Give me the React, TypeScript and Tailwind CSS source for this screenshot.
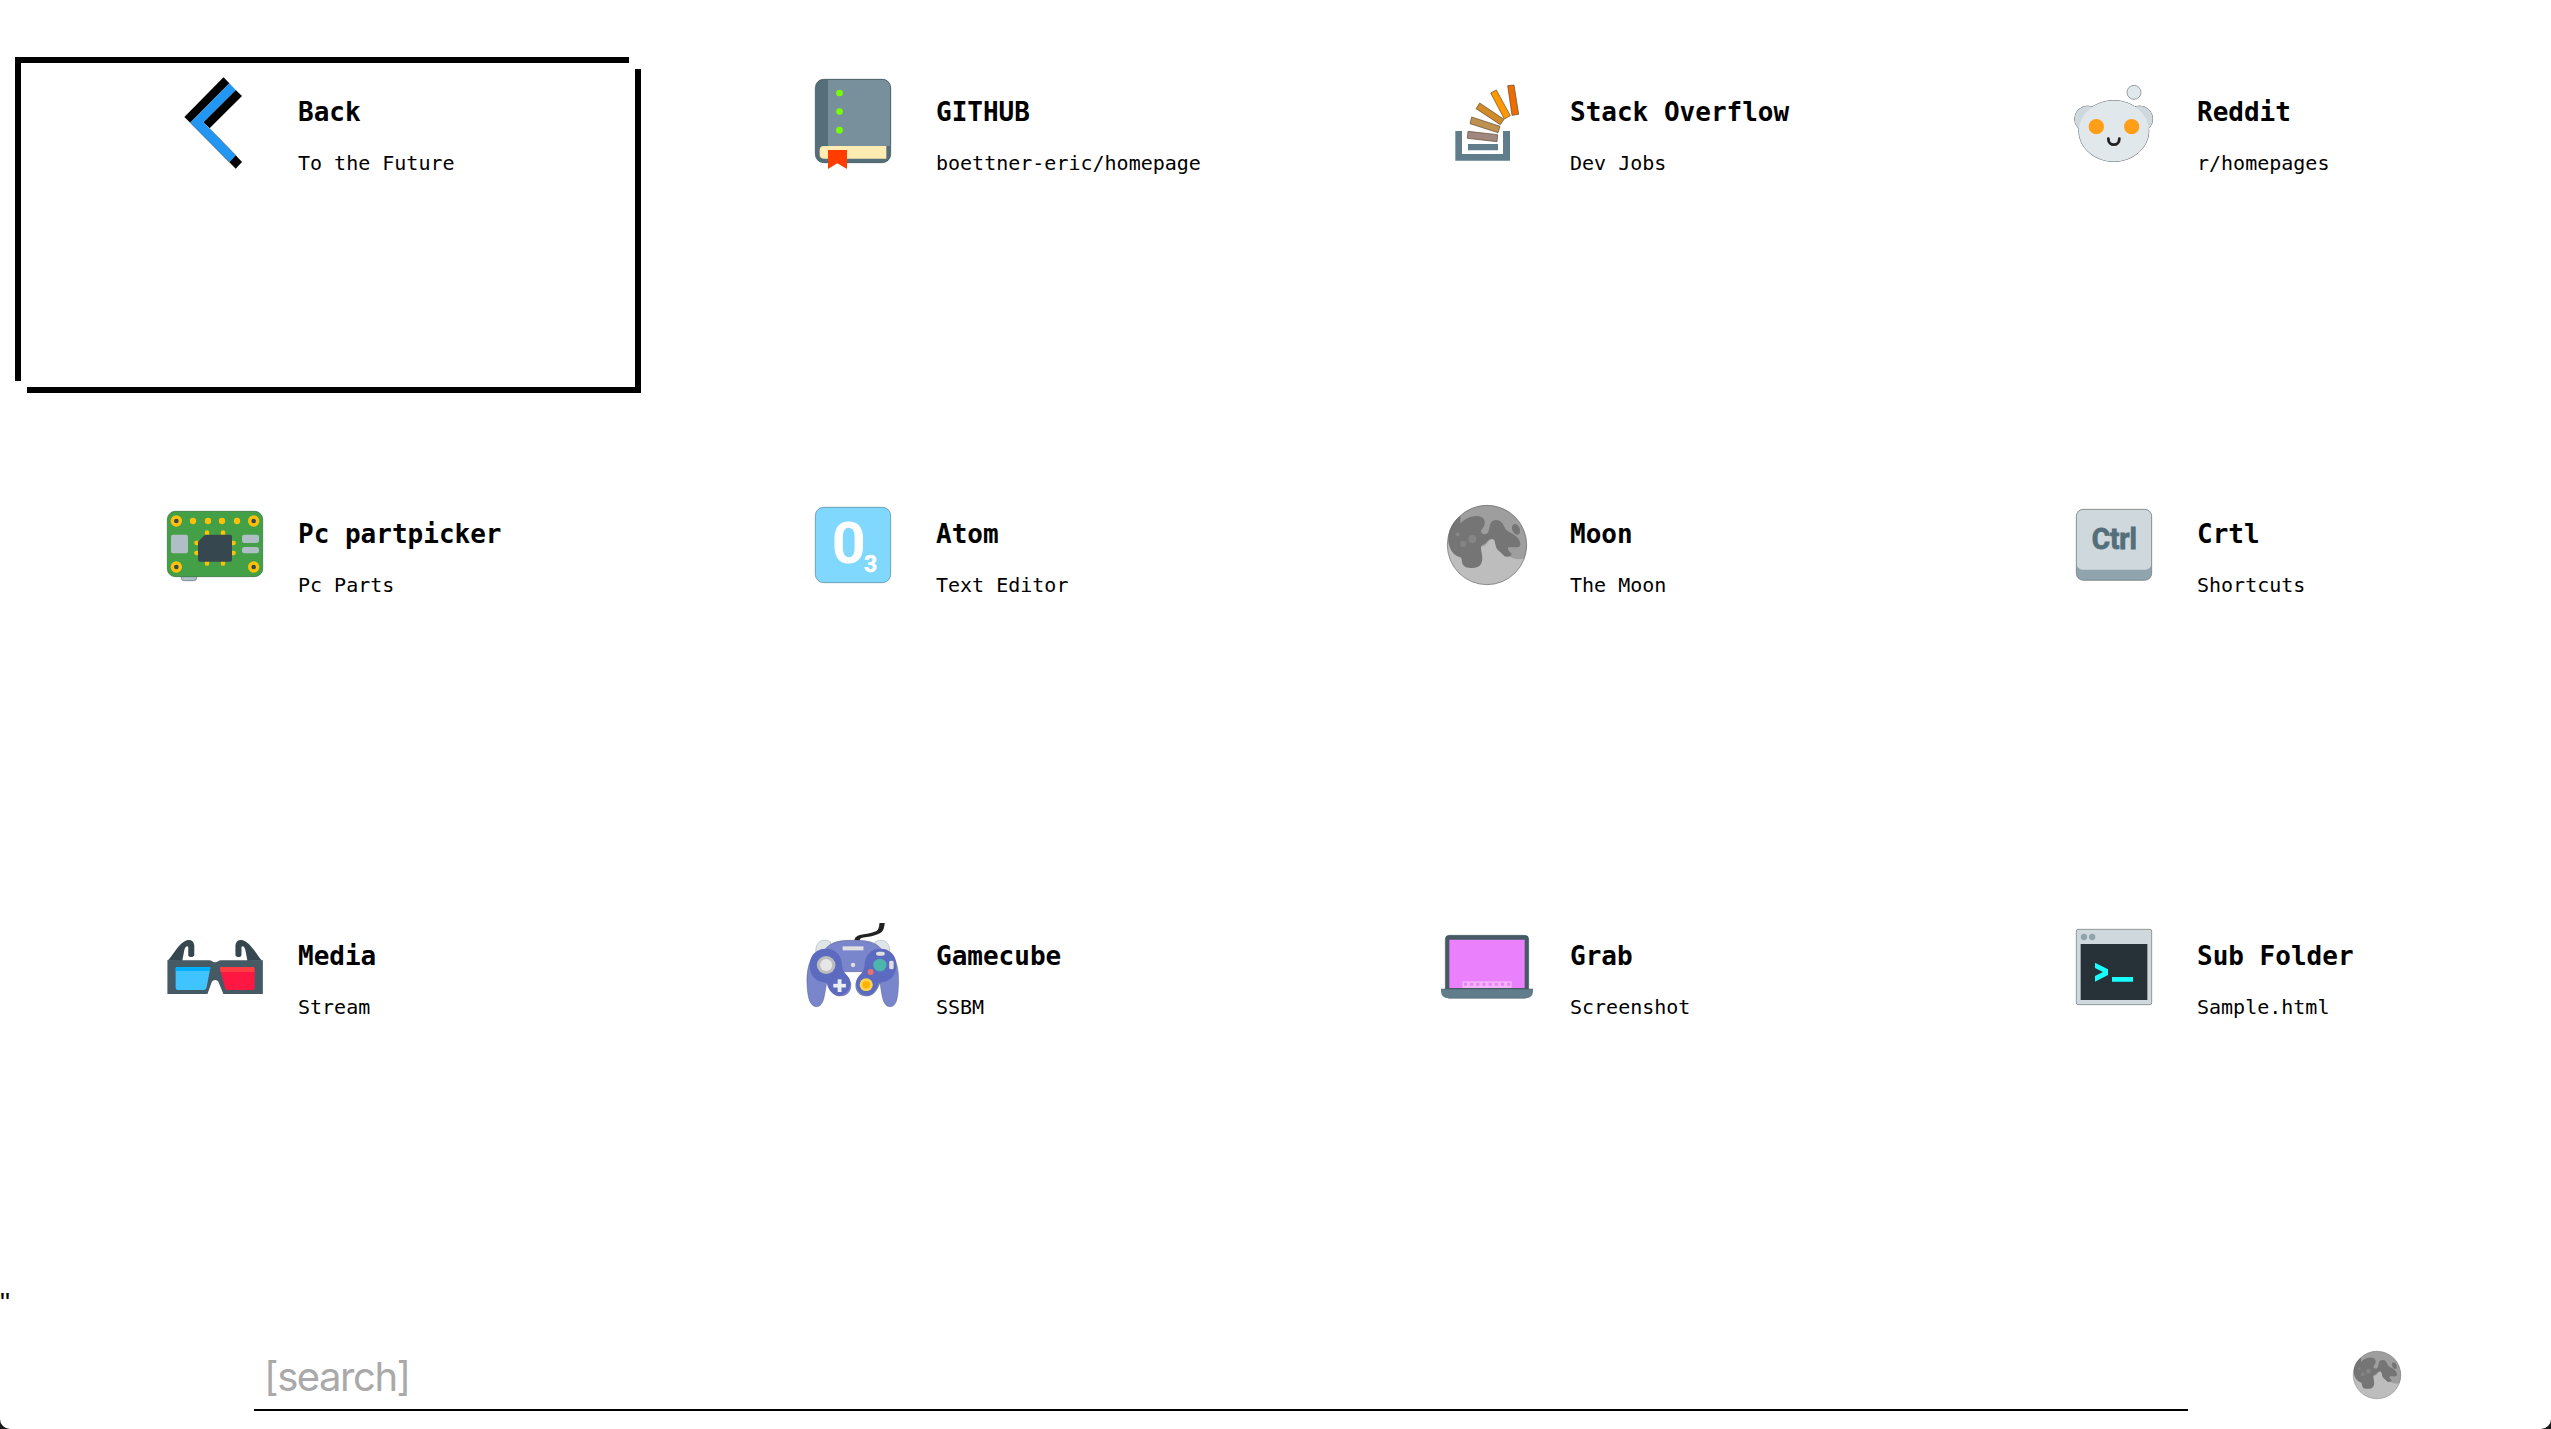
import React from "react";

const icon = "block size-[100px] shrink-0 overflow-visible";

function BackIcon() {
  return (
    <svg className={icon} viewBox="392 99 237.6 300" preserveAspectRatio="none">
      <path d="M438 231 531 112l14 18-93 118z" fill="#000" />
      <path d="m560 150 15 18-77 97-15-18z" fill="#000" />
      <path d="m545 130 15 20-77 97 77 99-15 21-93-119z" fill="#2196f3" />
      <path d="m560 346 15 20-15 20-15-19z" fill="#000" />
      <path d="m452 248 93 119M498 265l62 81" stroke="#263238" strokeWidth="1.2" fill="none" />
    </svg>
  );
}

function BookIcon() {
  return (
    <svg className={icon} viewBox="69 39 300 300">
      <rect x="106" y="58" width="226" height="250" rx="25" fill="#546e7a" />
      <path d="M144 58h163a25 25 0 0 1 25 25v175H144z" fill="#78909c" />
      <rect x="106" y="58" width="226" height="250" rx="25" fill="none" stroke="#37474f" strokeWidth="2" />
      <path d="M319 258v38H131q-12 0-12-13v-12q0-13 12-13z" fill="#ffecb3" />
      <path d="M144 270h57v57l-29-17-28 17z" fill="#ff3d00" />
      <circle cx="178.500" cy="99" r="10" fill="#76ff03" />
      <circle cx="178.500" cy="154.500" r="10" fill="#76ff03" />
      <circle cx="178.500" cy="210.500" r="10" fill="#76ff03" />
    </svg>
  );
}

function StackIcon() {
  return (
    <svg className={icon} viewBox="51 39 300 300">
      <path d="M106 213h20v69h123v-69h21v89H106zM144 252h90v19h-90z" fill="#607d8b" />
      <g stroke="#5a4630" strokeWidth="2">
        <path d="m144 214 89 10-2 21-89-10z" fill="#a1887f" />
        <path d="m155 171 85 28-6 19-84-27z" fill="#bf9150" />
        <path d="m179 129 73 49-11 16-73-48z" fill="#d08a28" />
        <path d="m229 90 42 77-18 10-41-78z" fill="#ff9800" />
        <path d="m282 75 14 88-20 3-13-89z" fill="#ef6c00" />
      </g>
    </svg>
  );
}

function RedditIcon() {
  return (
    <svg className={icon} viewBox="72 39 300 300">
      <g stroke="#6b7479" strokeWidth="3">
        <circle cx="143" cy="177" r="39" />
        <circle cx="299" cy="177" r="39" />
        <ellipse cx="221.500" cy="213" rx="105" ry="91.500" />
      </g>
      <circle cx="143" cy="177" r="39" fill="#cfd8dc" />
      <circle cx="299" cy="177" r="39" fill="#cfd8dc" />
      <ellipse cx="221.500" cy="213" rx="105" ry="91.500" fill="#e1e8eb" />
      <circle cx="282" cy="97" r="21" fill="#e1e8eb" stroke="#6b7479" strokeWidth="2" />
      <circle cx="169" cy="200" r="23" fill="#ff9f17" />
      <circle cx="275" cy="200" r="23" fill="#ff9f17" />
      <path d="M205 236c0 24 33 24 33 0" fill="none" stroke="#212121" strokeWidth="8.500" strokeLinecap="round" />
    </svg>
  );
}

function BoardIcon() {
  return (
    <svg className={icon} viewBox="75 45 300 300">
      <path d="M124 286h46v7q0 9-9 9h-28q-9 0-9-9z" fill="#b0bec5" stroke="#546e7a" strokeWidth="2" />
      <rect x="82" y="94" width="286" height="196" rx="24" fill="#43a047" stroke="#2e6b3a" strokeWidth="2" />
      {[[109, 123], [341, 123], [109, 261], [341, 261]].map(([x, y]) => (
        <circle key={`${x}-${y}`} cx={x} cy={y} r="12" fill="#37474f" stroke="#ffc107" strokeWidth="10" />
      ))}
      {[159, 204, 246, 291].map((x) => (
        <circle key={x} cx={x} cy="123" r="9.500" fill="#ffc107" />
      ))}
      <path
        d="M201 157v94M249 157v94M169 189h112M169 219h112"
        stroke="#ffc107"
        strokeWidth="13"
        strokeLinecap="round"
      />
      <path d="M195 164h75q6 0 6 6v69q0 6-6 6h-90q-6 0-6-6v-54z" fill="#37474f" />
      <rect x="93" y="164" width="51" height="56" rx="6" fill="#b0bec5" />
      <rect x="306" y="164" width="51" height="25" rx="7" fill="#b0bec5" />
      <rect x="306" y="201" width="51" height="19" rx="7" fill="#b0bec5" />
    </svg>
  );
}

function AtomIcon() {
  return (
    <svg className={icon} viewBox="69 45 300 300">
      <rect x="106" y="82" width="226" height="226" rx="25" fill="#80d8ff" stroke="#4f7f93" strokeWidth="2" />
      <text x="155" y="250" fontFamily="Roboto, sans-serif" fontWeight="700" fontSize="171" textLength="102" lengthAdjust="spacingAndGlyphs" fill="#fff">0</text>
      <text x="252" y="275" fontFamily="Roboto, sans-serif" fontWeight="700" fontSize="69" fill="#fff" stroke="#fff" strokeWidth="1.500">3</text>
    </svg>
  );
}

function MoonIcon({ className = icon }: { className?: string }) {
  return (
    <svg className={className} viewBox="51 45 300 300">
      <circle cx="201" cy="195" r="119" fill="#bdbdbd" />
      <path
        d="M88 158A119 119 0 0 1 201 76a119 119 0 0 1 112 159c-14 5-32 2-43-5l-30-15c-13-10-12-39-24-38-14 3-16 24-30 22l-90-7z"
        fill="#9e9e9e"
      />
      <path
        d="M121 107v24c10-13 31-23 49-23 19 0 30 14 22 31-5 8-11 11-8 18 4 9 17 7 21-2 6-15 3-34 22-35 25-1 23 26 35 32 15 10 38 19 39 39 1 14-16 11-29 10-14-2-8 14 2 18 2 10-9 13-21 10-9-14-24-18-26-32-3-12-2-21-11-20-14 0-14 13-27 17-12 4-2 22-2 41-1 20-9 30-34 29-38 0-21-30-33-32-31-11-39-44-34-71 5-22 17-40 35-54z"
        fill="#757575"
      />
      <ellipse cx="288" cy="148" rx="11" ry="17" transform="rotate(-24 288 148)" fill="#757575" />
      <circle cx="157" cy="177" r="12" fill="#858585" />
      <circle cx="130" cy="192" r="9" fill="#858585" />
      <circle cx="113" cy="163" r="6" fill="#858585" />
      <circle cx="201" cy="195" r="119" fill="none" stroke="#666" strokeWidth="2" />
    </svg>
  );
}

function CtrlIcon() {
  return (
    <svg className={icon} viewBox="72 45 300 300">
      <rect x="109" y="88" width="226" height="213" rx="21" fill="#90a4ae" />
      <rect x="109" y="88" width="226" height="181" rx="19" fill="#cfd8dc" />
      <rect x="109" y="88" width="226" height="213" rx="21" fill="none" stroke="#66716f" strokeWidth="2" />
      <text x="155" y="206" fontFamily="Roboto, sans-serif" fontWeight="700" fontSize="87" textLength="136" lengthAdjust="spacingAndGlyphs" fill="#546e7a" stroke="#546e7a" strokeWidth="2.500">Ctrl</text>
    </svg>
  );
}

function GlassesIcon() {
  return (
    <svg className={icon} viewBox="45.600 51 182.300 300" preserveAspectRatio="none">
      <path d="M50 182c9-12 16-42 30-57 8-9 18-6 19 11v30c-1 7-11 7-11 0v-24c-1-6-5-4-7 7l-4 34zM223 182c-9-12-16-42-30-57-8-9-18-6-19 11v30c1 7 11 7 11 0v-24c1-6 5-4 7 7l4 34z" fill="#37474f" />
      <path d="M50 181h76c5 0 6 6 11 6s6-6 11-6h76v101h-72l-8-32c-2-13-12-13-14 0l-7 32H50z" fill="#455a64" />
      <path d="M67 201h60q2 0 1 5l-6 51q-1 13-6 13H69q-4 0-4-7v-55q0-7 2-7z" fill="#40c4ff" />
      <path d="M67 201h60q2 0 1 5l-1 7H65v-5q0-7 2-7z" fill="#00b0ff" />
      <path d="M207 201h-60q-2 0-1 5l8 51q1 13 6 13h45q4 0 4-7v-55q0-7-2-7z" fill="#ff1744" />
      <path d="M207 201h-60q-2 0-1 5l1 10h62v-8q0-7-2-7z" fill="#ff3d42" />
    </svg>
  );
}

function GamepadIcon() {
  return (
    <svg className={icon} viewBox="1208.800 51 182.300 300" preserveAspectRatio="none">
      <path d="M1307 121c2-15 10-11 25-17 15-5 20-9 21-35" fill="none" stroke="#212121" strokeWidth="9.500" />
      <path d="M1232 155c0-42 21-37 27-29v30zM1367 155c0-42-21-37-27-29v30z" fill="#e0e6e8" stroke="#8b9699" strokeWidth="1" />
      <path
        d="M1300 121c25 0 40 3 52 27 20 2 32 38 31 100-1 45-3 70-15 72-15 0-15-40-19-72-6 28-14 40-24 40-13 0-21-14-20-36 1-20 13-18 14-37h-37c1 19 13 17 14 37 1 22-7 36-20 36-10 0-18-12-24-40-4 32-4 72-19 72-12-2-16-27-17-72-1-62 13-98 33-100 12-24 26-27 51-27z"
        fill="#7986cb"
        stroke="#4b527c"
        strokeWidth="1"
      />
      <path d="M1251 146c16 0 29 18 29 52 2 28 16 27 15 53-2 46-38 48-42-2-23-3-32-24-32-54 0-31 13-49 30-49zM1350 146c-16 0-29 18-29 52-2 28-16 27-15 53 2 46 35 48 40-2 23-3 33-24 33-54 0-31-13-49-29-49z" fill="#5c6bc0" />
      <ellipse cx="1251" cy="195" rx="17" ry="27" fill="#bdbdbd" />
      <ellipse cx="1251" cy="195" rx="11" ry="18" fill="#e6e6e6" />
      <path d="M1264 257h23" stroke="#eceff1" strokeWidth="11" />
      <path d="M1275.500 238v38" stroke="#eceff1" strokeWidth="7" />
      <ellipse cx="1324" cy="254" rx="12" ry="19" fill="#ffd54f" />
      <ellipse cx="1324" cy="254" rx="7" ry="11" fill="#ffb300" />
      <ellipse cx="1349" cy="195" rx="12" ry="19" fill="#4db6ac" />
      <ellipse cx="1332" cy="216" rx="5.500" ry="9" fill="#e57373" />
      <ellipse cx="1300" cy="195" rx="4" ry="6.500" fill="#e0e0e0" />
      <path d="M1281 139h38v12h-38z" fill="#e0e0e0" />
      <rect x="1342" y="155" width="16" height="12" rx="5" fill="#e0e0e0" />
      <rect x="1366" y="182" width="8" height="26" rx="4" fill="#e0e0e0" />
    </svg>
  );
}

function LaptopIcon() {
  return (
    <svg className={icon} viewBox="51 51 300 300">
      <path d="M76 270V118q0-12 12-12h226q12 0 12 12v152z" fill="#455a64" stroke="#37474f" strokeWidth="1.500" />
      <path d="M88 119h226v145H88z" fill="#ea80fc" />
      <path d="M127 244h148v20H127z" fill="#f3b3fd" />
      <path d="M132 253h140" stroke="#ea80fc" strokeWidth="9" strokeDasharray="9 9.500" />
      <path d="M63 267h276v6q0 22-22 22H85q-22 0-22-22z" fill="#607d8b" />
      <path d="M63 267h276M85 295h232" stroke="#455a64" strokeWidth="1.500" />
    </svg>
  );
}

function ConsoleIcon() {
  return (
    <svg className={icon} viewBox="72 51 300 300">
      <rect x="109" y="88" width="226" height="226" rx="5" fill="#cfd8dc" stroke="#66716f" strokeWidth="2" />
      <path d="M122 132h200v168H122z" fill="#263238" />
      <circle cx="132" cy="111" r="9.500" fill="#90a4ae" />
      <circle cx="156.500" cy="111" r="9.500" fill="#90a4ae" />
      <path d="m165 188 39 20v17l-39 20v-17l24-12-24-12zM216 231h63v14h-63z" fill="#18ffff" />
    </svg>
  );
}

const tiles = [
  { title: "Back", note: "To the Future", Icon: BackIcon },
  { title: "GITHUB", note: "boettner-eric/homepage", Icon: BookIcon },
  { title: "Stack Overflow", note: "Dev Jobs", Icon: StackIcon },
  { title: "Reddit", note: "r/homepages", Icon: RedditIcon },
  { title: "Pc partpicker", note: "Pc Parts", Icon: BoardIcon },
  { title: "Atom", note: "Text Editor", Icon: AtomIcon },
  { title: "Moon", note: "The Moon", Icon: MoonIcon },
  { title: "Crtl", note: "Shortcuts", Icon: CtrlIcon },
  { title: "Media", note: "Stream", Icon: GlassesIcon },
  { title: "Gamecube", note: "SSBM", Icon: GamepadIcon },
  { title: "Grab", note: "Screenshot", Icon: LaptopIcon },
  { title: "Sub Folder", note: "Sample.html", Icon: ConsoleIcon },
];

function SelectionFrame() {
  return (
    <div className="pointer-events-none absolute inset-0">
      <i className="absolute top-0 left-0 h-1.5 w-[614px] bg-black" />
      <i className="absolute top-0 left-0 h-[324px] w-1.5 bg-black" />
      <i className="absolute right-0 bottom-0 h-[324px] w-1.5 bg-black" />
      <i className="absolute right-0 bottom-0 h-1.5 w-[614px] bg-black" />
    </div>
  );
}

export default function App() {
  return (
    <div className="h-[1429px] w-[2551px] overflow-hidden bg-[#181818]">
      <div className="flex h-full flex-col rounded-b-[10px] bg-white text-black">
        <main className="grid h-[1285px] shrink-0 grid-cols-[638px_634px_627px_1fr] grid-rows-[422px_422px_1fr] pt-[57px] pl-[15px] font-['DejaVu_Sans_Mono',monospace]">
          {tiles.map(({ title, note, Icon }, i) => (
            <a key={title} className="relative flex h-[336px] w-[626px] items-start pt-4 pl-[150px]">
              {i === 0 && <SelectionFrame />}
              <Icon />
              <div className="ml-[33px] whitespace-nowrap pt-[23px]">
                <h2 className="text-[26px] leading-[32px] font-bold">{title}</h2>
                <p className="mt-[22px] text-[20px] leading-[26px]">{note}</p>
              </div>
            </a>
          ))}
        </main>
        <div className="h-8 shrink-0 pt-0.5 font-['Liberation_Sans',sans-serif] text-[28px] leading-8 -tracking-[1px]">"</div>
        <footer className="flex flex-1 items-start">
          <input
            className="ml-[254px] h-[94px] w-[1934px] border-b-2 border-black bg-transparent pt-[26px] pl-2.5 font-['Inter',sans-serif] text-[40px] tracking-[-1.45px] outline-none placeholder:text-[#a9a9a9]"
            placeholder="[search]"
          />
          <div className="ml-[159px] pt-[28px]">
            <MoonIcon className="block size-[60px]" />
          </div>
        </footer>
      </div>
    </div>
  );
}
